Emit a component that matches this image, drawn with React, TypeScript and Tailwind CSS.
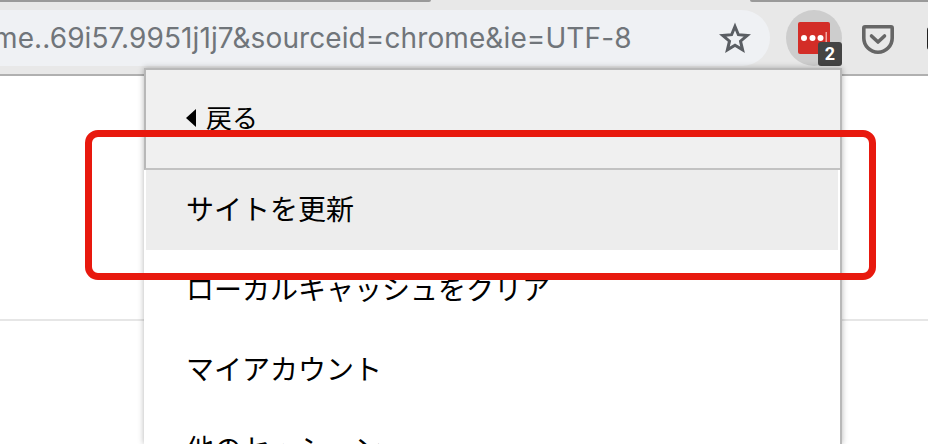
export default function App() {
  const cjk = { fontFamily: '"Noto Sans CJK JP", sans-serif' };
  return (
    <div className="relative w-[928px] h-[444px] overflow-hidden bg-white">
      {/* Toolbar */}
      <div className="relative h-[76px] bg-[#e8e8e8] border-b-2 border-[#b0b0b0] flex items-start pt-[10px]">
        <div className="absolute left-0 top-0 h-[2px] w-[431px] bg-[#9a9a9a] rounded-br-md" />
        <div className="absolute right-0 top-0 h-[2px] w-[178px] bg-[#9a9a9a] rounded-bl-md" />
        <div className="w-[770px] h-[56px] bg-[#eff1f4] rounded-r-[28px] flex items-center justify-between overflow-hidden shrink-0">
          <span className="text-[28px] tracking-[0.1px] text-[#70757a] whitespace-nowrap -ml-[7px] -mt-[1px] leading-none" style={{ fontFamily: '"Inter", sans-serif' }}>
            me..69i57.9951j1j7&amp;sourceid=chrome&amp;ie=UTF-8
          </span>
          <svg width="32" height="32" viewBox="0 0 32 32" className="mr-[19px] shrink-0">
            <path d="M16 4.5l3.4 8.2 8.9.7-6.8 5.8 2.1 8.7-7.6-4.7-7.6 4.7 2.1-8.7-6.8-5.8 8.9-.7z" fill="none" stroke="#5a5e63" strokeWidth="3" strokeLinejoin="miter" />
          </svg>
        </div>
        <div className="relative ml-[16px] w-[56px] h-[56px] rounded-full bg-[#cdcdcd] flex items-center justify-center shrink-0">
          <svg width="32" height="32" viewBox="0 0 32 32">
            <rect width="32" height="32" rx="2" fill="#d32d27" />
            <circle cx="6" cy="16" r="3" fill="#fff" />
            <circle cx="14.500" cy="16" r="3" fill="#fff" />
            <circle cx="22.500" cy="16" r="3" fill="#fff" />
            <rect x="27.500" y="10" width="1.500" height="12" fill="#f2a5a0" />
          </svg>
          <div className="absolute right-0 bottom-0 w-[24px] h-[24px] rounded-[3px] bg-[#444444] flex items-center justify-center text-white text-[18px] font-bold leading-none" style={{ fontFamily: '"Roboto", sans-serif' }}>
            2
          </div>
        </div>
        <div className="ml-[20px] mt-[15px] shrink-0">
          <svg width="32" height="29" viewBox="0 0 32 29">
            <path d="M3 1.800h26a1.200 1.200 0 0 1 1.200 1.200v10a14.200 14.200 0 0 1-28.400 0V3a1.200 1.200 0 0 1 1.200-1.200z" fill="none" stroke="#666666" strokeWidth="3.600" />
            <path d="M9.500 11l6.500 6 6.500-6" fill="none" stroke="#666666" strokeWidth="3.600" strokeLinecap="round" strokeLinejoin="round" />
          </svg>
        </div>
        <div className="ml-[33px] mt-[17px] w-[3px] h-[23px] bg-[#222222] rounded-l-sm shrink-0" />
      </div>
      {/* Page */}
      <div className="h-[245px] border-b-2 border-[#e6e6e6] bg-white" />

      {/* Extension menu */}
      <div className="absolute left-[144px] top-[68px] w-[698px] h-[376px] bg-white border-r-2 border-[#b8b8b8] shadow-[0_0_6px_rgba(0,0,0,0.3)] text-black text-[28px]" style={cjk}>
        <div className="h-[102px] bg-[#f0f0f0] border-l-2 border-t-2 border-b-2 border-t-[#b8b8b8] border-l-[#b8b8b8] border-b-[#c2c2c2] flex items-center pl-[40px] pb-[4px]">
          <span className="w-0 h-0 border-y-[9px] border-y-transparent border-r-[10px] border-r-black mr-[10px] mt-[1px]" />
          <span className="text-[26px] leading-none">戻る</span>
        </div>
        <div className="h-[80px] bg-[#ededed] ml-[2px] mr-[2px] flex items-center pl-[40px] pb-[4px] leading-none">サイトを更新</div>
        <div className="h-[80px] flex items-center pl-[42px] pb-[4px] leading-none">ローカルキャッシュをクリア</div>
        <div className="h-[80px] flex items-center pl-[42px] pb-[4px] leading-none">マイアカウント</div>
        <div className="h-[80px] flex items-center pl-[42px] pb-[4px] leading-none">他のセッション</div>
      </div>

      {/* Annotation */}
      <div className="absolute left-[85px] top-[130px] w-[791px] h-[150px] border-[7px] border-[#e8190e] rounded-[13px]" />
    </div>
  );
}
